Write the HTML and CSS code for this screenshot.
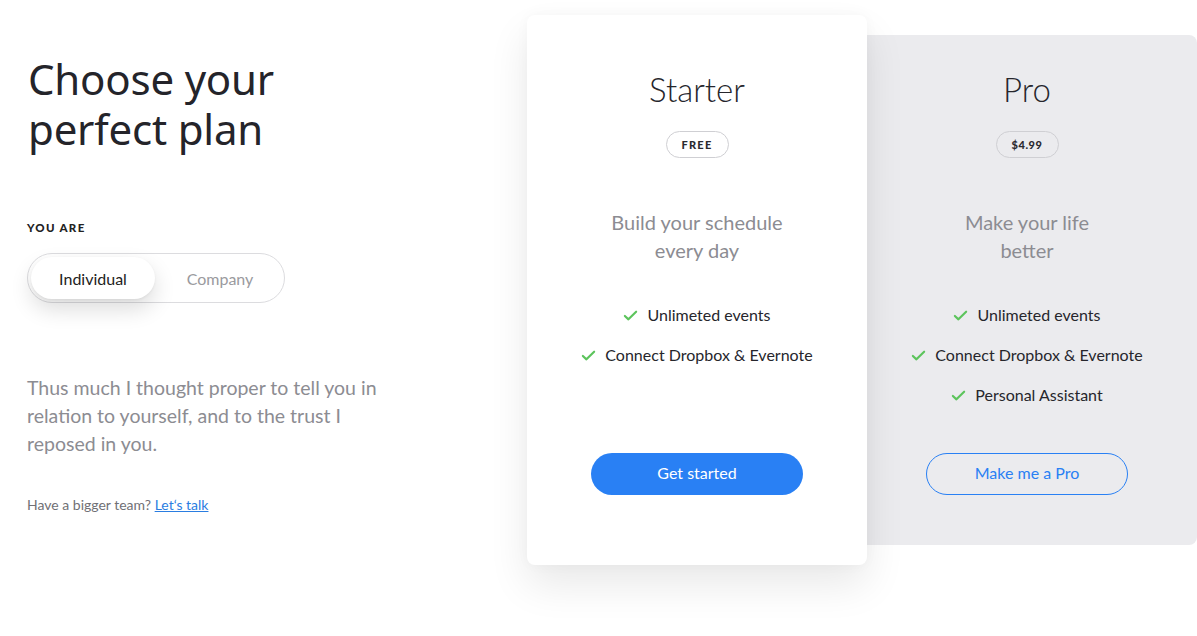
FILE: index.html
```html
<!DOCTYPE html>
<html lang="en">
<head>
<meta charset="utf-8">
<title>Choose your perfect plan</title>
<link rel="stylesheet" href="styles.css">
</head>
<body>
<main class="page">
  <section class="intro">
    <h1 class="title"><span class="title-line">Choose your</span><span class="title-line">perfect plan</span></h1>
    <div class="label">YOU ARE</div>
    <div class="toggle">
      <span class="toggle-opt active">Individual</span>
      <span class="toggle-opt">Company</span>
    </div>
    <p class="lead">Thus much I thought proper to tell you in relation to yourself, and to the trust I reposed in you.</p>
    <p class="small">Have a bigger team? <a href="#" class="link">Let‘s talk</a></p>
  </section>
  <section class="plans">
    <div class="card card-starter">
      <h2 class="plan-name">Starter</h2>
      <span class="badge">FREE</span>
      <p class="plan-desc">Build your schedule<br>every day</p>
      <ul class="features">
        <li><svg class="check" viewBox="0 0 16 16"><path d="M2 8.5l3.8 3.6L14 4"/></svg>Unlimeted events</li>
        <li><svg class="check" viewBox="0 0 16 16"><path d="M2 8.5l3.8 3.6L14 4"/></svg>Connect Dropbox &amp; Evernote</li>
      </ul>
      <a href="#" class="btn btn-primary">Get started</a>
    </div>
    <div class="card card-pro">
      <h2 class="plan-name">Pro</h2>
      <span class="badge badge-price">$4.99</span>
      <p class="plan-desc">Make your life<br>better</p>
      <ul class="features">
        <li><svg class="check" viewBox="0 0 16 16"><path d="M2 8.5l3.8 3.6L14 4"/></svg>Unlimeted events</li>
        <li><svg class="check" viewBox="0 0 16 16"><path d="M2 8.5l3.8 3.6L14 4"/></svg>Connect Dropbox &amp; Evernote</li>
        <li><svg class="check" viewBox="0 0 16 16"><path d="M2 8.5l3.8 3.6L14 4"/></svg>Personal Assistant</li>
      </ul>
      <a href="#" class="btn btn-outline">Make me a Pro</a>
    </div>
  </section>
</main>
</body>
</html>
```

FILE: styles.css
```css
* { box-sizing: border-box; }
html, body { margin: 0; padding: 0; background: #fff; }
body { font-family: Lato, "Liberation Sans", sans-serif; color: #222; }

.page {
  display: flex;
  align-items: flex-start;
  width: 1197px;
  height: 636px;
  overflow: hidden;
}

.intro {
  width: 527px;
  padding: 54px 0 0 27px;
  flex-shrink: 0;
}

.title {
  margin: 0 0 0 1px;
  font-family: "Noto Sans", "Open Sans", sans-serif;
  font-weight: 400;
  font-size: 42px;
  color: #24242a;
  letter-spacing: -0.2px;
}

.title-line {
  display: block;
  height: 50px;
  line-height: 50px;
}

.label {
  margin-top: 67px;
  font-size: 11.5px;
  font-weight: 900;
  letter-spacing: 1.3px;
  color: #222;
  line-height: 14px;
}

.toggle {
  margin-top: 18px;
  width: 258px;
  height: 50px;
  border: 1px solid #dcdcdf;
  border-radius: 25px;
  padding: 3px;
  display: flex;
  align-items: center;
}

.toggle-opt {
  flex: 1;
  height: 42px;
  display: flex;
  align-items: center;
  justify-content: center;
  font-size: 16px;
  color: #9a9a9e;
  border-radius: 21px;
  padding-left: 4px;
}

.toggle-opt.active {
  flex: 0 0 124px;
  padding-left: 0;
  background: #fff;
  color: #222;
  box-shadow: 0 10px 22px rgba(0, 0, 0, 0.14), 0 1px 3px rgba(0, 0, 0, 0.06);
}

.lead {
  margin: 71px 0 0;
  width: 370px;
  font-size: 19.5px;
  line-height: 28px;
  color: #8c8c92;
}

.small {
  margin: 38px 0 0;
  font-size: 14px;
  line-height: 18px;
  color: #707075;
}

.link { color: #2a7de1; text-decoration: underline; }

.plans {
  display: flex;
  align-items: center;
  height: 580px;
}

.card {
  width: 340px;
  border-radius: 8px;
  display: flex;
  flex-direction: column;
  align-items: center;
  text-align: center;
}

.card-starter {
  position: relative;
  z-index: 1;
  height: 550px;
  padding: 54px 0 70px;
  background: #fff;
  box-shadow: 0 20px 40px rgba(0, 0, 0, 0.09), 0 0 14px rgba(0, 0, 0, 0.03);
}

.card-pro {
  margin-left: -10px;
  height: 510px;
  padding: 34px 0 50px;
  background: #ebebee;
}

.plan-name {
  margin: 0;
  font-weight: 300;
  font-size: 33px;
  line-height: 40px;
  color: #26262c;
}

.badge {
  margin-top: 22px;
  width: 63px;
  height: 27px;
  border: 1px solid #cfcfd3;
  border-radius: 14px;
  display: inline-flex;
  align-items: center;
  justify-content: center;
  font-size: 11px;
  font-weight: 900;
  letter-spacing: 1.3px;
  color: #2a2a30;
}

.badge-price { letter-spacing: 0.6px; }

.plan-desc {
  margin: 50px 0 0;
  font-size: 20px;
  line-height: 28px;
  color: #8c8c92;
}

.features {
  list-style: none;
  margin: 39px 0 0;
  padding: 0;
  display: flex;
  flex-direction: column;
  align-items: center;
  gap: 16px;
}

.features li {
  display: flex;
  align-items: center;
  font-size: 16px;
  line-height: 24px;
  color: #26262c;
}

.check {
  width: 15px;
  height: 15px;
  margin-right: 9px;
  fill: none;
  stroke: #5cc45c;
  stroke-width: 2.3;
  stroke-linecap: round;
  stroke-linejoin: round;
}

.btn {
  margin-top: auto;
  height: 42px;
  border-radius: 21px;
  display: flex;
  align-items: center;
  justify-content: center;
  font-size: 16px;
  padding-bottom: 3px;
  text-decoration: none;
}

.btn-primary {
  width: 212px;
  background: #2980f4;
  color: #fff;
}

.btn-outline {
  width: 202px;
  border: 1px solid #2980f4;
  color: #2980f4;
}
```
